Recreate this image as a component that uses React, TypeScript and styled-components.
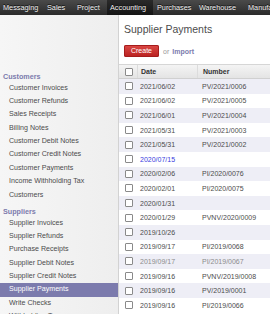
import React from 'react';
import styled, { createGlobalStyle } from 'styled-components';

const GlobalStyle = createGlobalStyle`
  html, body {
    margin: 0;
    padding: 0;
    width: 270px;
    height: 314px;
    overflow: hidden;
    background: #fff;
    font-family: "Liberation Sans", Arial, sans-serif;
  }
`;

const Page = styled.div`
  display: flex;
  flex-direction: column;
  width: 270px;
  height: 314px;
  overflow: hidden;
`;

const TopBar = styled.div`
  display: flex;
  height: 15px;
  background: linear-gradient(#4a4a4a, #2b2b2b);
  flex-shrink: 0;
  white-space: nowrap;
`;

const MenuItem = styled.div<{ $active?: boolean; $w: number; $pad: number }>`
  width: ${(p) => p.$w}px;
  flex-shrink: 0;
  padding-left: ${(p) => p.$pad}px;
  box-sizing: border-box;
  font-size: 7.3px;
  line-height: 15px;
  color: #eeeeee;
  text-shadow: 0 -1px 0 #111;
  background: ${(p) => (p.$active ? 'linear-gradient(#2a2a2a, #151515)' : 'transparent')};
`;

const Body = styled.div`
  display: flex;
  flex: 1;
  min-height: 0;
`;

const Sidebar = styled.div`
  width: 119px;
  flex-shrink: 0;
  padding-top: 52px;
  background: linear-gradient(to right, #f6f6f6, #eeeeee);
  border-right: 1px solid #d2d2d2;
  box-sizing: border-box;
`;

const SideHeader = styled.div`
  margin-top: 4.5px;
  padding-left: 3px;
  height: 10px;
  line-height: 10px;
  font-size: 7.2px;
  font-weight: bold;
  color: #7c7bad;
`;

const SideItem = styled.div<{ $active?: boolean }>`
  height: 13.4px;
  line-height: 13.4px;
  padding-left: 9px;
  font-size: 7.1px;
  color: ${(p) => (p.$active ? '#ffffff' : '#4c4c4c')};
  background: ${(p) => (p.$active ? '#7c7bad' : 'transparent')};
  white-space: nowrap;
`;

const Content = styled.div`
  flex: 1;
  min-width: 0;
  display: flex;
  flex-direction: column;
`;

const Title = styled.div`
  padding: 7px 0 0 5px;
  height: 14px;
  line-height: 14px;
  font-size: 10.5px;
  color: #4c4c4c;
  white-space: nowrap;
`;

const Actions = styled.div`
  display: flex;
  align-items: center;
  gap: 3px;
  padding: 9px 0 0 5px;
  height: 12px;
  font-size: 7px;
  white-space: nowrap;
`;

const CreateButton = styled.div`
  width: 35px;
  height: 12px;
  line-height: 12px;
  text-align: center;
  color: #fff;
  border-radius: 2px;
  background: linear-gradient(#dc4a46, #b8201f);
  box-shadow: inset 0 0 0 1px #a51c1c;
  font-size: 7px;
`;

const Or = styled.span`
  color: #9a9a9a;
  margin-left: 1px;
`;

const ImportLink = styled.span`
  color: #7c7bad;
  font-weight: bold;
`;

const Table = styled.div`
  margin-top: 7px;
  display: flex;
  flex-direction: column;
`;

const Row = styled.div<{ $shade?: boolean; $head?: boolean }>`
  display: grid;
  grid-template-columns: 18px 60px 1fr;
  height: ${(p) => (p.$head ? 15 : 14.6)}px;
  align-items: center;
  font-size: 7px;
  background: ${(p) =>
    p.$head ? 'linear-gradient(#f4f4f4, #e4e4e4)' : p.$shade ? '#eeeef6' : '#ffffff'};
  border-top: ${(p) => (p.$head ? '1px solid #d6d6d6' : 'none')};
  border-bottom: ${(p) => (p.$head ? '1px solid #d0d0d0' : 'none')};
  box-sizing: border-box;
  white-space: nowrap;
`;

const Cell = styled.div<{ $pad: number; $head?: boolean; $tone?: string }>`
  height: 100%;
  display: flex;
  align-items: center;
  padding-left: ${(p) => p.$pad}px;
  color: ${(p) => (p.$head ? '#333' : p.$tone === 'blue' ? '#3b3be0' : p.$tone === 'grey' ? '#8c8c8c' : '#4c4c4c')};
  font-weight: ${(p) => (p.$head ? 'bold' : 'normal')};
  border-left: ${(p) => (p.$head && p.$pad > 0 ? '1px solid #dcdcdc' : 'none')};
  box-sizing: border-box;
`;

const Check = styled.span`
  display: block;
  width: 6px;
  height: 6px;
  margin-left: 6px;
  border: 1px solid #8a8a8a;
  border-radius: 1px;
  background: #fff;
`;

// label, cell width, left padding, active
const menu: [string, number, number, boolean?][] = [
  ['Messaging', 47, 3],
  ['Sales', 30, 0],
  ['Project', 30, 0],
  ['Accounting', 46, 3, true],
  ['Purchases', 46, 4],
  ['Warehouse', 49, 0],
  ['Manufacturing', 60, 0],
];

const customers = [
  'Customer Invoices',
  'Customer Refunds',
  'Sales Receipts',
  'Billing Notes',
  'Customer Debit Notes',
  'Customer Credit Notes',
  'Customer Payments',
  'Income Withholding Tax',
  'Customers',
];

const suppliers = [
  'Supplier Invoices',
  'Supplier Refunds',
  'Purchase Receipts',
  'Supplier Debit Notes',
  'Supplier Credit Notes',
  'Supplier Payments',
  'Write Checks',
  'Withholding Tax',
];

const rows: [string, string, string?][] = [
  ['2021/06/02', 'PV/2021/0006'],
  ['2021/06/02', 'PV/2021/0005'],
  ['2021/06/01', 'PV/2021/0004'],
  ['2021/05/31', 'PV/2021/0003'],
  ['2021/05/31', 'PV/2021/0002'],
  ['2020/07/15', '', 'blue'],
  ['2020/02/06', 'PI/2020/0076'],
  ['2020/02/01', 'PI/2020/0075'],
  ['2020/01/31', ''],
  ['2020/01/29', 'PVNV/2020/0009'],
  ['2019/10/26', ''],
  ['2019/09/17', 'PI/2019/0068'],
  ['2019/09/17', 'PI/2019/0067', 'grey'],
  ['2019/09/16', 'PVNV/2019/0008'],
  ['2019/09/16', 'PV/2019/0001'],
  ['2019/09/16', 'PI/2019/0066'],
];

export default function App() {
  return (
    <Page>
      <GlobalStyle />
      <TopBar>
        {menu.map(([label, w, pad, active]) => (
          <MenuItem key={label} $w={w} $pad={pad} $active={active}>
            {label}
          </MenuItem>
        ))}
      </TopBar>
      <Body>
        <Sidebar>
          <SideHeader>Customers</SideHeader>
          {customers.map((c) => (
            <SideItem key={c}>{c}</SideItem>
          ))}
          <SideHeader>Suppliers</SideHeader>
          {suppliers.map((s) => (
            <SideItem key={s} $active={s === 'Supplier Payments'}>
              {s}
            </SideItem>
          ))}
        </Sidebar>
        <Content>
          <Title>Supplier Payments</Title>
          <Actions>
            <CreateButton>Create</CreateButton>
            <Or>or</Or>
            <ImportLink>Import</ImportLink>
          </Actions>
          <Table>
            <Row $head>
              <Cell $pad={0} $head>
                <Check />
              </Cell>
              <Cell $pad={3} $head>Date</Cell>
              <Cell $pad={5} $head>Number</Cell>
            </Row>
            {rows.map(([date, num, tone], i) => (
              <Row key={i} $shade={i % 2 === 0}>
                <Cell $pad={0}>
                  <Check />
                </Cell>
                <Cell $pad={3} $tone={tone}>{date}</Cell>
                <Cell $pad={5} $tone={tone}>{num}</Cell>
              </Row>
            ))}
          </Table>
        </Content>
      </Body>
    </Page>
  );
}
